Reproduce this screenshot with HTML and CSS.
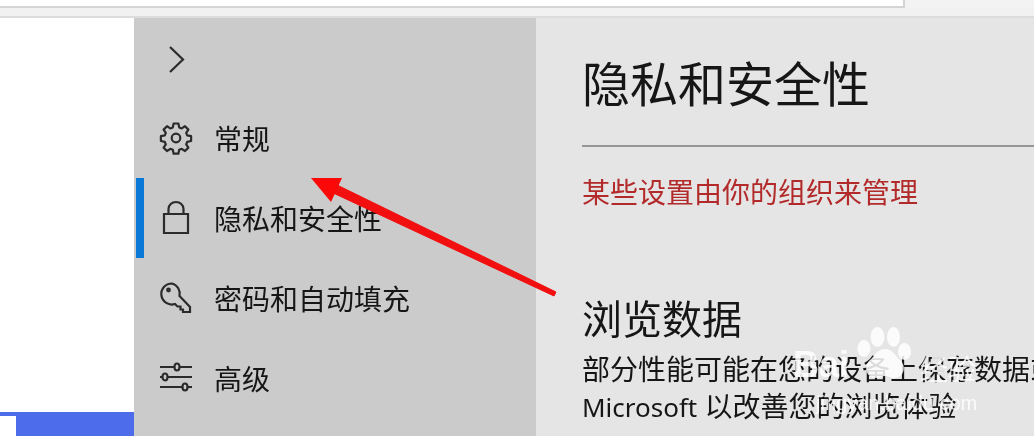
FILE: index.html
```html
<!DOCTYPE html>
<html>
<head>
    <link rel="stylesheet" href="styles.css">
</head>
<body>
    <div class="topbar">
        <div class="address"></div>
    </div>
    <div class="toolbar"></div>
    <div class="window">
        <div class="page">
            <div class="page-blank"></div>
            <div class="page-footer"><div class="footer-box"></div></div>
        </div>
        <div class="sidebar">
            <div class="side-row toggle">
                <svg class="icon" viewBox="0 0 32 32"><path d="M10 5 L23 17.500 L10 30"/></svg>
            </div>
            <div class="side-row">
                <svg class="icon" viewBox="0 0 32 32">
                    <circle cx="16" cy="16" r="4.300"/>
                    <path d="M13.6 1.5h4.8l.8 3.9 2.500 1 3.300-2.200 3.400 3.400-2.200 3.300 1 2.500 3.900.8v4.800l-3.900.8-1 2.500 2.200 3.300-3.400 3.400-3.300-2.200-2.500 1-.8 3.900h-4.800l-.8-3.900-2.500-1-3.300 2.200-3.400-3.400 2.200-3.300-1-2.500-3.900-.8v-4.800l3.900-.8 1-2.500-2.200-3.300 3.400-3.400 3.300 2.200 2.500-1z" stroke-linejoin="round"/>
                </svg>
                <span>常规</span>
            </div>
            <div class="side-row active">
                <svg class="icon" viewBox="0 0 32 32">
                    <path d="M4 12h24v19H4z"/>
                    <path d="M8.500 12V7a7.500 7 0 0 1 15 0V12"/>
                </svg>
                <span>隐私和安全性</span>
            </div>
            <div class="side-row">
                <svg class="icon" viewBox="0 0 32 32">
                    <path d="M12 1.5a10.500 10.500 0 1 0 3 20.500l2.500 2.500h3v3h2.500v2.500h7v-5L19.500 14A10.500 10.500 0 0 0 12 1.500z"/>
                    <circle cx="8.500" cy="8" r="1.300"/>
                </svg>
                <span>密码和自动填充</span>
            </div>
            <div class="side-row">
                <svg class="icon" viewBox="0 0 32 32">
                    <path d="M0 5h14.500M19.500 5h12.500M0 15h2.500M7.500 15h24.500M0 25h22.500M27.500 25h4.500"/>
                    <ellipse cx="17" cy="5" rx="2.500" ry="3.500"/>
                    <ellipse cx="5" cy="15" rx="2.500" ry="3.500"/>
                    <ellipse cx="25" cy="25" rx="2.500" ry="3.500"/>
                </svg>
                <span>高级</span>
            </div>
        </div>
        <div class="main">
            <h1 class="title">隐私和安全性</h1>
            <div class="divider"></div>
            <p class="managed">某些设置由你的组织来管理</p>
            <h2 class="section">浏览数据</h2>
            <p class="desc">部分性能可能在您的设备上保存数据或将其发送到<br><span class="latin">Microsoft</span> 以改善您的浏览体验</p>
        </div>
    </div>

    <svg class="arrow" viewBox="0 0 1034 436">
        <path class="arrow-line" d="M331 192 L335 184 L556 292 L554 296 Z"/>
        <path class="arrow-head" d="M311 178 L342 178 L331 202 Z"/>
    </svg>

    <div class="watermark">
        <svg class="paw" viewBox="0 0 70 65">
            <ellipse cx="14" cy="28.500" rx="6.500" ry="8.500"/>
            <ellipse cx="27.500" cy="17" rx="7" ry="10"/>
            <ellipse cx="43.500" cy="17" rx="6.500" ry="10"/>
            <ellipse cx="54.500" cy="31.500" rx="6.500" ry="8.500"/>
            <path d="M35 29c-8 0-10 7-15 11-7 6-4 18 6 18 4 0 6-2 9-2s5 2 9 2c10 0 13-12 6-18-5-4-7-11-15-11z"/>
        </svg>
        <span class="wm-name">Bai</span>
        <span class="wm-jy">经验</span>
        <span class="wm-url">jingyan.baidu.com</span>
    </div>
</body>
</html>
```

FILE: styles.css
```css
html, body {
    margin: 0;
    height: 100%;
    overflow: hidden;
}
body {
    font-family: "Noto Sans CJK SC", "Liberation Sans", sans-serif;
    background-color: #f2f2f2;
    color: #161616;
    position: relative;
    filter: blur(0.4px);
}
.topbar {
    height: 8px;
    background-color: #f3f3f3;
}
.address {
    width: 903px;
    height: 6px;
    background-color: #fff;
    border-bottom: 2px solid #d4d4d4;
    border-right: 2px solid #d4d4d4;
}
.toolbar {
    height: 8px;
    background-color: #f1f1f1;
    border-bottom: 2px solid #dcdcdc;
}
.window {
    display: flex;
    height: 418px;
}
.page {
    width: 134px;
    display: flex;
    flex-direction: column;
    box-shadow: inset -8px 0 8px -8px #d8d8d8;
}
.page-blank {
    flex: 1;
    background-color: #fff;
}
.page-footer {
    height: 24px;
    background-color: #4c6cec;
    padding-top: 4px;
    box-sizing: border-box;
}
.footer-box {
    width: 16px;
    height: 20px;
    background-color: #fff;
}
.sidebar {
    width: 402px;
    background-color: #cbcbcb;
    padding-top: 2px;
}
.side-row {
    height: 80px;
    display: flex;
    align-items: center;
    gap: 22px;
    padding-left: 26px;
    font-size: 28px;
    position: relative;
}
.side-row span {
    width: 200px;
    margin-top: -5px;
    white-space: nowrap;
}
.side-row.active::before {
    content: "";
    position: absolute;
    left: 2px;
    top: -2px;
    width: 8px;
    height: 80px;
    background-color: #0a78d6;
}
.icon {
    width: 32px;
    height: 32px;
    margin-top: -4px;
    overflow: visible;
    fill: none;
    stroke: #2b2b2b;
    stroke-width: 2.200;
}
.main {
    flex: 1;
    min-width: 0;
    background-color: #e5e5e5;
    padding: 27px 0 0 46px;
    white-space: nowrap;
    overflow: hidden;
}
.title {
    margin: 0;
    font-size: 48px;
    line-height: 72px;
    font-weight: 400;
}
.divider {
    height: 2px;
    background-color: #969696;
    margin-top: 28px;
}
.managed {
    margin: 26px 0 0;
    font-size: 28px;
    line-height: 36px;
    color: #b32a2a;
}
.section {
    margin: 80px 0 0;
    font-size: 40px;
    line-height: 56px;
    font-weight: 400;
}
.desc {
    margin: 5px 0 0;
    font-size: 28px;
    line-height: 37px;
}
.latin {
    font-family: "Noto Sans", "Liberation Sans", sans-serif;
    font-size: 26px;
    margin-right: 1px;
}
.arrow {
    position: absolute;
    left: 0;
    top: 0;
    width: 1034px;
    height: 436px;
}
.arrow-line {
    fill: #f20f0f;
    stroke: #f20f0f;
    stroke-width: 1;
    stroke-linejoin: round;
}
.arrow-head {
    fill: #fb0808;
}
.watermark {
    position: absolute;
    left: 0;
    top: 0;
    width: 1034px;
    height: 436px;
    color: rgba(255, 255, 255, 0.85);
}
.paw {
    position: absolute;
    left: 850px;
    top: 320px;
    width: 70px;
    height: 65px;
    fill: rgba(255, 255, 255, 0.85);
}
.wm-name {
    position: absolute;
    left: 793px;
    top: 340px;
    font-family: "Liberation Sans", sans-serif;
    font-size: 36px;
    font-weight: 700;
    line-height: 50px;
}
.wm-jy {
    position: absolute;
    left: 920px;
    top: 346px;
    font-size: 28px;
    line-height: 44px;
}
.wm-url {
    position: absolute;
    left: 816px;
    top: 391px;
    font-family: "Liberation Sans", sans-serif;
    font-size: 20px;
    line-height: 24px;
}
```
